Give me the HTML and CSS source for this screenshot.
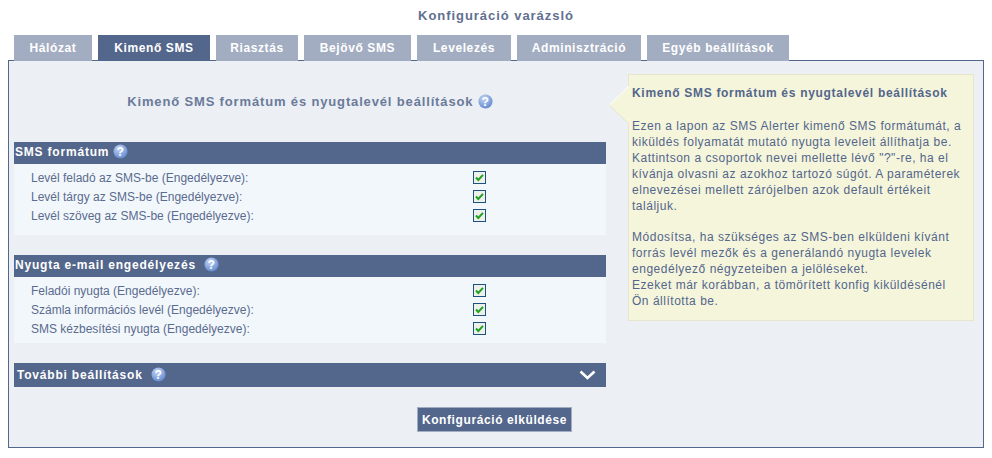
FILE: index.html
```html
<!DOCTYPE html>
<html lang="hu">

<head>
    <meta charset="UTF-8">
    <title>Konfiguráció varázsló</title>
    <link rel="stylesheet" href="styles.css">
</head>

<body>
    <svg class="defs" width="0" height="0">
        <defs>
            <radialGradient id="helpfill" cx="40%" cy="30%" r="75%">
                <stop offset="0" stop-color="#c4d6f4" />
                <stop offset="1" stop-color="#5f86cf" />
            </radialGradient>
            <symbol id="help" viewBox="0 0 16 16">
                <circle cx="8" cy="8" r="7.5" fill="url(#helpfill)" />
                <text x="8" y="12.5" text-anchor="middle" font-family="Liberation Sans, sans-serif" font-size="13" font-weight="700" fill="#fff">?</text>
            </symbol>
            <symbol id="check" viewBox="0 0 13 13">
                <rect x="0.5" y="0.5" width="12" height="12" fill="#eef0ea" stroke="#1c5180" />
                <path d="M3 6.5 L5.3 9 L10 3.8" fill="none" stroke="#21a121" stroke-width="2" />
            </symbol>
        </defs>
    </svg>

    <h1 class="title">Konfiguráció varázsló</h1>

    <ul class="tabs">
        <li>Hálózat</li>
        <li class="active">Kimenő SMS</li>
        <li>Riasztás</li>
        <li>Bejövő SMS</li>
        <li>Levelezés</li>
        <li>Adminisztráció</li>
        <li>Egyéb beállítások</li>
    </ul>

    <div class="panel">
        <form class="form">
            <h2 class="heading">Kimenő SMS formátum és nyugtalevél beállítások <svg class="help"><use href="#help" /></svg></h2>

            <div class="bar">SMS formátum <svg class="help"><use href="#help" /></svg></div>
            <div class="rows">
                <div class="row"><span>Levél feladó az SMS-be (Engedélyezve):</span><svg class="check"><use href="#check" /></svg></div>
                <div class="row"><span>Levél tárgy az SMS-be (Engedélyezve):</span><svg class="check"><use href="#check" /></svg></div>
                <div class="row"><span>Levél szöveg az SMS-be (Engedélyezve):</span><svg class="check"><use href="#check" /></svg></div>
            </div>

            <div class="bar">Nyugta e-mail engedélyezés&nbsp; <svg class="help"><use href="#help" /></svg></div>
            <div class="rows rows-short">
                <div class="row"><span>Feladói nyugta (Engedélyezve):</span><svg class="check"><use href="#check" /></svg></div>
                <div class="row"><span>Számla információs levél (Engedélyezve):</span><svg class="check"><use href="#check" /></svg></div>
                <div class="row"><span>SMS kézbesítési nyugta (Engedélyezve):</span><svg class="check"><use href="#check" /></svg></div>
            </div>

            <div class="bar bar-more">
                <span>További beállítások&nbsp; <svg class="help"><use href="#help" /></svg></span>
                <svg class="chevron" viewBox="0 0 17 10"><path d="M1.5 1.5 L8.5 8 L15.5 1.5" fill="none" stroke="#fff" stroke-width="2.6" /></svg>
            </div>

            <div class="actions">
                <button type="button" class="send">Konfiguráció elküldése</button>
            </div>
        </form>

        <aside class="note">
            <svg class="note-arrow" viewBox="0 0 20 38">
                <polygon points="20,0 0.5,19 20,38" fill="#f5f5dc" />
                <polyline points="20,0 0.5,19" fill="none" stroke="#fff" />
                <polyline points="0.5,19 20,38" fill="none" stroke="#e6e6cc" />
            </svg>
            <h3>Kimenő SMS formátum és nyugtalevél beállítások</h3>
            <p>Ezen a lapon az SMS Alerter kimenő SMS formátumát, a<br>kiküldés folyamatát mutató nyugta leveleit állíthatja be.<br>Kattintson a csoportok nevei mellette lévő "?"-re, ha el<br>kívánja olvasni az azokhoz tartozó súgót. A paraméterek<br>elnevezései mellett zárójelben azok default értékeit<br>találjuk.</p>
            <p>Módosítsa, ha szükséges az SMS-ben elküldeni kívánt<br>forrás levél mezők és a generálandó nyugta levelek<br>engedélyező négyzeteiben a jelöléseket.<br>Ezeket már korábban, a tömörített konfig kiküldésénél<br>Ön állította be.</p>
        </aside>
    </div>
</body>

</html>
```

FILE: styles.css
```css
html,
body {
    padding: 0;
    margin: 0;
    background: #fff;
    font-family: "Liberation Sans", Arial, sans-serif;
    font-size: 12px;
    color: #53668b;
}

.defs {
    display: block;
}

.title {
    margin: 0;
    height: 35px;
    line-height: 32px;
    font-size: 13px;
    font-weight: 700;
    letter-spacing: 0.95px;
    text-align: center;
    color: #5f7090;
}

.tabs {
    display: grid;
    grid-template-columns: 78px 112px 82px 107px 94px 124px 142px;
    gap: 6px;
    height: 25px;
    padding: 0 0 0 14px;
    margin: 0;
    list-style: none;
}

.tabs li {
    line-height: 26px;
    font-size: 12px;
    font-weight: 700;
    letter-spacing: 0.6px;
    text-align: center;
    color: #fff;
    background: #a3adc1;
}

.tabs .active {
    background: #53668b;
}

.panel {
    display: flex;
    box-sizing: border-box;
    width: 976px;
    height: 388px;
    padding: 13px 9px 0 5px;
    margin-left: 8px;
    border: 1px solid #53668b;
    background: #eceff3;
}

.form {
    width: 592px;
}

.heading {
    margin: 0;
    height: 68px;
    line-height: 56px;
    font-size: 13px;
    font-weight: 700;
    letter-spacing: 0.85px;
    text-align: center;
    color: #6a7a9b;
}

.help {
    width: 15px;
    height: 15px;
    vertical-align: -3px;
}

.bar {
    height: 22px;
    padding-left: 1px;
    line-height: 21px;
    font-size: 12px;
    font-weight: 700;
    letter-spacing: 0.8px;
    color: #fff;
    background: #53668b;
}

.bar-more {
    display: flex;
    justify-content: space-between;
    align-items: center;
    height: 24px;
    padding-right: 10px;
    padding-left: 3px;
}

.chevron {
    width: 17px;
    height: 10px;
}

.rows {
    box-sizing: border-box;
    height: 71px;
    padding: 4px 0 0 17px;
    margin-bottom: 20px;
    background: #f2f7fb;
}

.rows-short {
    height: 66px;
}

.row {
    display: flex;
    align-items: center;
    height: 19px;
    font-size: 12px;
    color: #5a6b8f;
}

.row span {
    width: 442px;
}

.check {
    width: 13px;
    height: 13px;
}

.actions {
    padding: 20px 0 0 403px;
}

.send {
    display: block;
    width: 155px;
    height: 25px;
    padding: 0;
    border: 1px solid #a3adc1;
    font-family: inherit;
    font-size: 12px;
    font-weight: 700;
    letter-spacing: 0.6px;
    color: #fff;
    background: #53668b;
}

.note {
    position: relative;
    box-sizing: border-box;
    width: 346px;
    height: 247px;
    padding: 10px 3px 0 3px;
    margin-left: 22px;
    border: 1px solid #e6e6cc;
    background: #f5f5dc;
    line-height: 16px;
}

.note-arrow {
    position: absolute;
    top: 11px;
    left: -20px;
    width: 20px;
    height: 38px;
}

.note h3 {
    margin: 0 0 17px;
    font-size: 12px;
    font-weight: 700;
    letter-spacing: 0.7px;
}

.note p {
    margin: 0 0 15px;
    font-size: 12px;
    letter-spacing: 0.52px;
}
```
